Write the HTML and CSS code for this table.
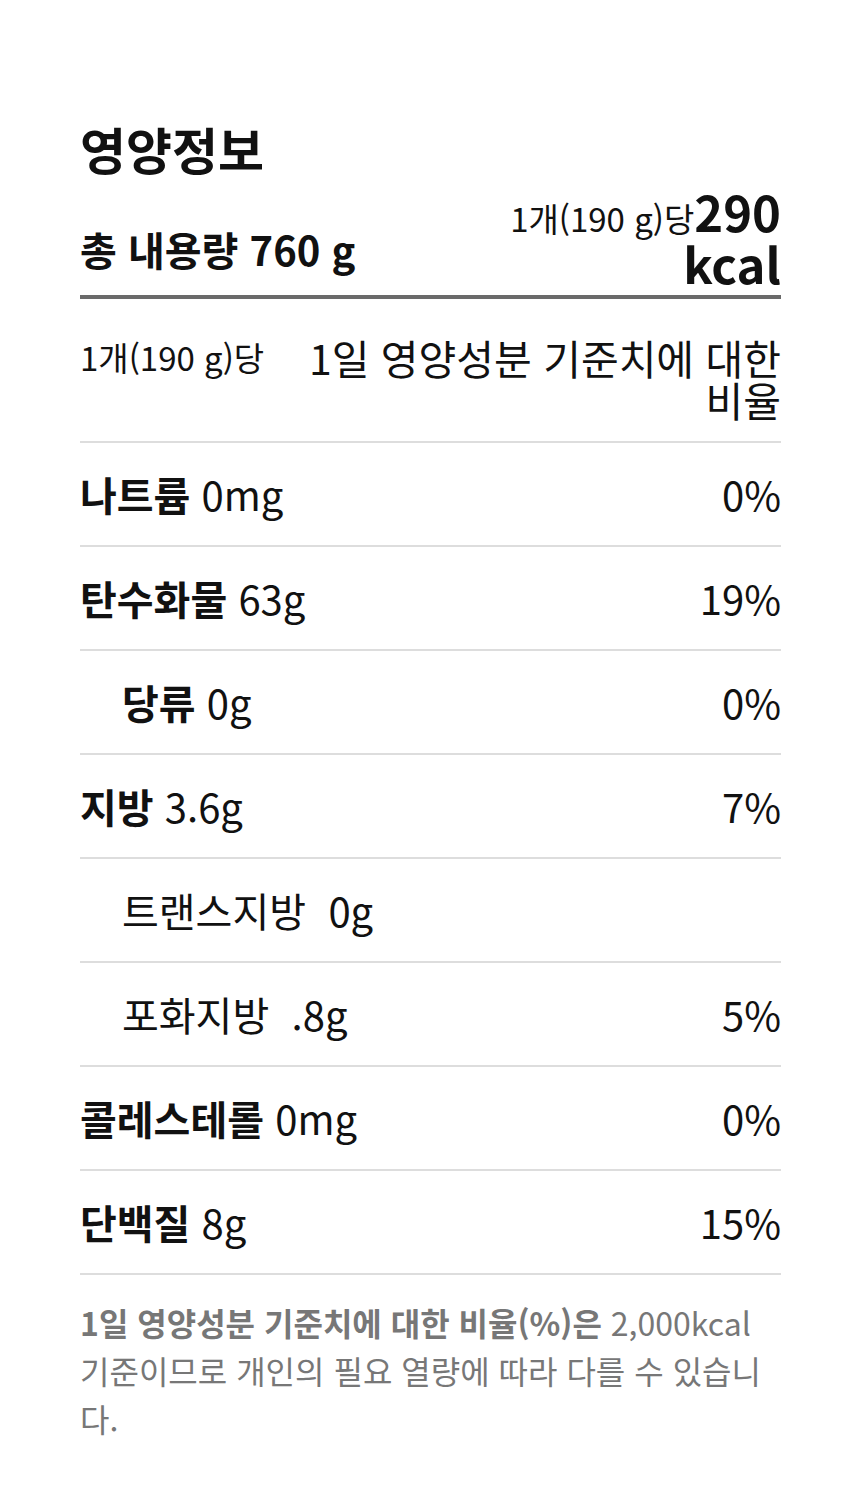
FILE: index.html
```html
<!DOCTYPE html>
<html lang="ko">
<head>
<meta charset="utf-8">
<link rel="stylesheet" href="styles.css">
</head>
<body>
<div class="panel">
  <h1 class="title">영양정보</h1>
  <div class="summary">
    <div class="total">총 내용량 760 g</div>
    <div class="kcal"><span class="per">1개(190 g)당</span><b>290</b> <b>kcal</b></div>
  </div>
  <div class="head-row">
    <div class="per">1개(190 g)당</div>
    <div class="ratio">1일 영양성분 기준치에 대한 비율</div>
  </div>
  <div class="row"><div class="name"><b>나트륨</b> 0mg</div><div class="pct">0%</div></div>
  <div class="row"><div class="name"><b>탄수화물</b> 63g</div><div class="pct">19%</div></div>
  <div class="row sub"><div class="name"><b>당류</b> 0g</div><div class="pct">0%</div></div>
  <div class="row"><div class="name"><b>지방</b> 3.6g</div><div class="pct">7%</div></div>
  <div class="row sub"><div class="name">트랜스지방&nbsp; 0g</div><div class="pct"></div></div>
  <div class="row sub"><div class="name">포화지방&nbsp; .8g</div><div class="pct">5%</div></div>
  <div class="row"><div class="name"><b>콜레스테롤</b> 0mg</div><div class="pct">0%</div></div>
  <div class="row"><div class="name"><b>단백질</b> 8g</div><div class="pct">15%</div></div>
  <p class="note"><b>1일 영양성분 기준치에 대한 비율(%)은</b> 2,000kcal 기준이므로 개인의 필요 열량에 따라 다를 수 있습니다.</p>
</div>
</body>
</html>
```
FILE: styles.css
```css
html, body {
  margin: 0;
  padding: 0;
  background: #fff;
}
body {
  font-family: "Noto Sans CJK KR", "Noto Sans", sans-serif;
  color: #111;
}
.panel {
  padding: 118px 79px 40px 80px;
}
.title {
  margin: 0;
  font-size: 50px;
  font-weight: 700;
  line-height: 60px;
}
.summary {
  display: flex;
  justify-content: space-between;
  align-items: center;
  padding: 7px 0 6px;
  border-bottom: 4px solid #6a6a6a;
}
.total {
  font-size: 40px;
  font-weight: 700;
  padding-top: 24px;
}
.kcal {
  max-width: 300px;
  text-align: right;
  font-size: 49px;
  line-height: 52px;
}
.kcal b {
  font-weight: 700;
}
.per {
  font-size: 33px;
  font-weight: 400;
}
.kcal .per {
  line-height: 1;
}
.head-row {
  display: flex;
  justify-content: space-between;
  align-items: flex-start;
  padding: 37px 0 21px;
  border-bottom: 2px solid #ddd;
}
.head-row .per {
  line-height: 42px;
}
.ratio {
  max-width: 485px;
  text-align: right;
  font-size: 41px;
  line-height: 42px;
}
.row {
  display: flex;
  justify-content: space-between;
  align-items: center;
  height: 102px;
  border-bottom: 2px solid #ddd;
  font-size: 40px;
}
.row b {
  font-weight: 700;
}
.row.sub .name {
  padding-left: 42px;
}
.note {
  margin: 23px 0 0;
  font-size: 32px;
  line-height: 48px;
  color: #777;
}
.note b {
  font-weight: 700;
}
```
